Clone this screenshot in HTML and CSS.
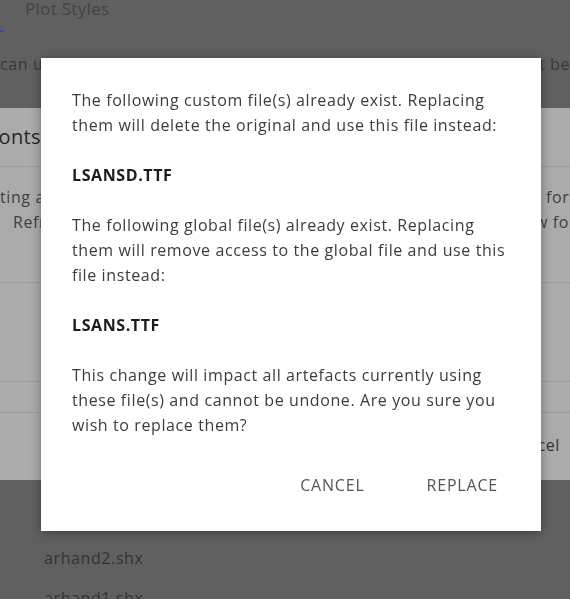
FILE: index.html
```html
<!DOCTYPE html>
<html lang="en">
<head>
    <meta charset="UTF-8">
    <meta name="viewport" content="width=device-width, initial-scale=1.0">
    <title>Replace files</title>
    <link rel="stylesheet" href="styles.css">
</head>
<body>
<!-- 背景頁面 (被遮罩) -->
<div class="page">
    <div class="tabs">
        <span class="tab-mark"></span>
        <span class="tab">Plot Styles</span>
    </div>
    <p class="hint">
        <span class="hint-left">can use</span>
        <span class="hint-right">cannot be</span>
    </p>

    <!-- 字型面板 -->
    <section class="fonts-panel">
        <h2 class="panel-title">Fonts</h2>
        <div class="panel-desc">
            <div class="desc-line">
                <span class="desc-left">Deleting a</span>
                <span class="desc-right">for all</span>
            </div>
            <div class="desc-line">
                <span class="desc-left second">Refresh</span>
                <span class="desc-right second">new fonts</span>
            </div>
        </div>
        <div class="panel-row tall"></div>
        <div class="panel-row"></div>
        <div class="panel-footer">
            <span class="panel-btn">Cancel</span>
        </div>
    </section>

    <ul class="file-list">
        <li>arhand2.shx</li>
        <li>arhand1.shx</li>
    </ul>
</div>

<!-- 取代確認對話框 -->
<div class="modal">
    <p>The following custom file(s) already exist. Replacing them will delete the original and use this file instead:</p>
    <p class="file-name">LSANSD.TTF</p>
    <p>The following global file(s) already exist. Replacing them will remove access to the global file and use this file instead:</p>
    <p class="file-name">LSANS.TTF</p>
    <p>This change will impact all artefacts currently using these file(s) and cannot be undone. Are you sure you wish to replace them?</p>
    <div class="actions">
        <button class="btn">Cancel</button>
        <button class="btn">Replace</button>
    </div>
</div>
</body>
</html>
```

FILE: styles.css
```css
/* 基本樣式 */
body {
    margin: 0;
    height: 599px;
    overflow: hidden;
    background-color: #606060; /* 遮罩後的頁面 */
    font-family: "Open Sans", "Liberation Sans", sans-serif;
    font-size: 16px;
    line-height: 25px;
    letter-spacing: 0.6px;
}
.page {
    width: 570px;
    overflow: hidden;
}

/* 分頁 */
.tabs {
    display: flex;
    align-items: flex-start;
    height: 33px;
}
.tab-mark {
    align-self: flex-end;
    width: 4px;
    height: 2px;
    margin-bottom: 1px;
    background-color: #2b4f8f;
}
.tab {
    margin-left: 21px;
    margin-top: -1px;
    font-size: 17px;
    line-height: 20px;
    letter-spacing: 0.3px;
    color: #3f4449;
}

.hint {
    display: flex;
    justify-content: space-between;
    margin: 19px 0 31px;
    color: #35383b;
    white-space: nowrap;
}

/* 字型面板 */
.fonts-panel {
    height: 372px;
    background-color: #ababab;
    color: #333;
}
.panel-title {
    margin: 0;
    padding: 14px 0 14px;
    font-size: 20px;
    font-weight: normal;
    line-height: 30px;
    letter-spacing: 0.3px;
    text-indent: -12px;
    color: #262626;
    border-bottom: 1px solid #9b9b9b;
}
.panel-desc {
    padding: 18px 0 47px;
    border-bottom: 1px solid #9b9b9b;
    color: #404040;
}
.desc-line {
    display: flex;
    justify-content: space-between;
    white-space: nowrap;
}
.desc-left {
    margin-left: -36px;
}
.desc-left.second {
    margin-left: 13px;
}
.desc-right {
    width: 24px;
}
.desc-right.second {
    width: 55px;
}
.panel-row {
    height: 30px;
    border-bottom: 1px solid #9b9b9b;
}
.panel-row.tall {
    height: 98px;
}
.panel-footer {
    display: flex;
    justify-content: flex-end;
    padding: 20px 10px 0 0;
}
.panel-btn {
    color: #333;
}

.file-list {
    list-style: none;
    margin: 0;
    padding: 66px 0 0 44px;
    color: #2f3338;
}
.file-list li {
    margin-bottom: 15px;
}

/* 對話框 */
.modal {
    position: fixed;
    left: 41px;
    top: 58px;
    width: 500px;
    box-sizing: border-box;
    padding: 30px 31px 28px;
    background-color: #fff;
    box-shadow: 0 2px 10px rgba(0, 0, 0, 0.35);
    color: #3c3c3c;
}
.modal p {
    margin: 0 0 25px;
}
.modal p:last-of-type {
    margin-bottom: 0;
}
.file-name {
    font-weight: bold;
    color: #1c1c1c;
}

/* 按鈕樣式 */
.actions {
    display: flex;
    justify-content: flex-end;
    gap: 30px;
    margin: 29px -4px 0 0;
}
.btn {
    height: 36px;
    padding: 0 16px;
    border: none;
    background: none;
    font-family: inherit;
    font-size: 16px;
    letter-spacing: 0.8px;
    text-transform: uppercase;
    color: #555;
    cursor: pointer;
}
```
